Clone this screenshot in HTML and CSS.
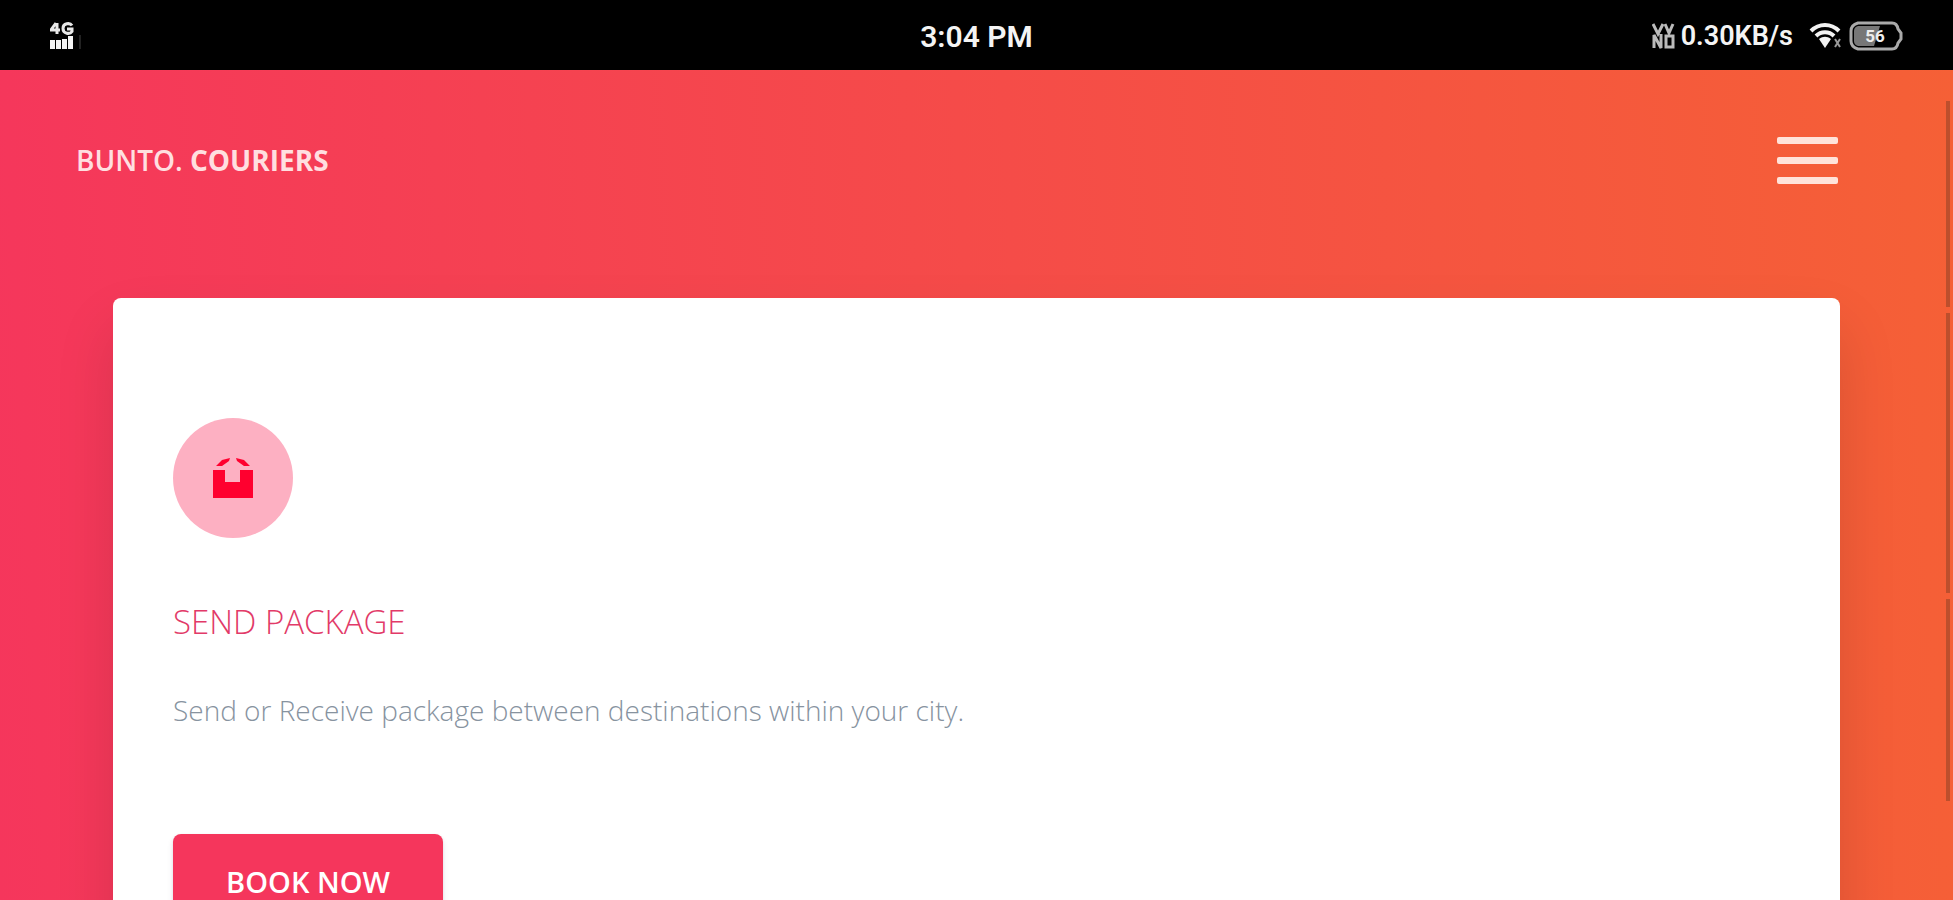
FILE: index.html
```
<!DOCTYPE html>
<html lang="en">
<head>
  <meta charset="UTF-8" />
  <meta name="viewport" content="width=device-width, initial-scale=1.0"/>
  <title>Bunto. Couriers</title>
  <link rel="stylesheet" href="styles.css">
</head>
<body>
  <div class="status-bar">
    <div class="status-left">
      <svg class="signal" width="32" height="30" viewBox="0 0 32 30" aria-hidden="true">
        <path d="M6 2L1 9h9M7 2v11M22 4.500c-2-3-9-2.500-9 3s7 6 9 3V8h-5" fill="none" stroke="#e8e8e8" stroke-width="3"/>
        <path d="M0 19h5v9H0zM6 19h5v9H6zM12 18h5v10h-5zM18 15h5v13h-5z" fill="#f4f4f4"/>
        <path d="M29 14h2v14h-2z" fill="#222"/>
      </svg>
    </div>
    <div class="clock">3:04 PM</div>
    <div class="status-right">
      <svg width="23" height="26" viewBox="0 0 23 26" aria-hidden="true">
        <path d="M1 1l5 10 5-10M2 25V12l7 13V11M13 1l4 9 4-9" fill="none" stroke="#bbb" stroke-width="3"/>
        <rect x="14" y="13" width="7" height="11" fill="none" stroke="#bbb" stroke-width="3"/>
      </svg>
      <span class="speed">0.30KB/s</span>
      <svg class="wifi" width="34" height="26" viewBox="0 0 34 26" aria-hidden="true">
        <path d="M2 8c8-8 20-8 28 0M7 13c5-5 13-5 18 0" fill="none" stroke="#f2f2f2" stroke-width="4"/>
        <path d="M10 16c4-3 8-3 12 0l-6 9z" fill="#f2f2f2"/>
        <path d="M26 16l5 8M31 16l-5 8" stroke="#999" stroke-width="2"/>
      </svg>
      <svg width="54" height="30" viewBox="0 0 54 30" aria-hidden="true">
        <path d="M9 2h34q5 0 6 6l3 4v6l-3 4q-1 6-6 6H9q-7-2-7-8v-10q0-6 7-8z" fill="#000" stroke="#aaa" stroke-width="3"/>
        <path d="M9 5h22l-6 20H9q-4-1-4-5V10q0-4 4-5z" fill="#777"/>
        <text class="battery-text" x="26" y="21" text-anchor="middle">56</text>
      </svg>
    </div>
  </div>

  <div class="page">
    <header class="navbar">
      <a class="brand" href="#">BUNTO. <b>COURIERS</b></a>
      <button class="menu-btn" type="button" aria-label="Menu">
        <span></span>
        <span></span>
        <span></span>
      </button>
    </header>

    <main class="card">
      <div class="icon-circle">
        <svg width="40" height="42" viewBox="0 0 40 42" aria-hidden="true">
          <path d="M0 13h12v12h15V13h13v28H0zM3 9l6-6 8-2-1 3-7 5zM23 1l8 2 6 6h-6l-7-5z" fill="#ff002f"/>
        </svg>
      </div>
      <h2>SEND PACKAGE</h2>
      <p>Send or Receive package between destinations within your city.</p>
      <button class="book-btn" type="button">BOOK NOW</button>
    </main>

    <div class="scroll-thumb">
      <span></span>
      <span></span>
      <span></span>
    </div>
  </div>
</body>
</html>
```
FILE: styles.css
```
* {
  box-sizing: border-box;
}

body {
  margin: 0;
  height: 100vh;
  display: flex;
  flex-direction: column;
  overflow: hidden;
  font-family: "Open Sans", sans-serif;
  background-color: #000;
}

.status-bar {
  flex: none;
  display: grid;
  grid-template-columns: 1fr auto 1fr;
  align-items: center;
  height: 70px;
  padding: 2px 50px 0;
  background-color: #000;
  color: #f4f4f4;
  font-family: Roboto, sans-serif;
  font-weight: 600;
}

.status-left,
.status-right {
  display: flex;
  align-items: center;
}

.status-right {
  justify-content: flex-end;
  gap: 6px;
}

.clock {
  font-size: 30px;
}

.speed {
  font-size: 27px;
}

.wifi {
  margin-left: 10px;
}

.battery-text {
  font-size: 17px;
  font-weight: 700;
  fill: #eee;
}

.page {
  position: relative;
  flex: 1;
  min-height: 0;
  overflow: hidden;
  background: linear-gradient(87deg, #f5365c 0%, #f56036 100%);
}

.navbar {
  display: flex;
  align-items: center;
  justify-content: space-between;
  height: 180px;
  padding: 0 115px 0 76px;
}

.brand {
  color: #ffdfe0;
  font-size: 28px;
  font-weight: 600;
  text-decoration: none;
}

.brand b {
  font-weight: 700;
}

.menu-btn {
  display: flex;
  flex-direction: column;
  gap: 13px;
  width: 61px;
  padding: 0;
  border: none;
  background: none;
  cursor: pointer;
}

.menu-btn span {
  height: 7px;
  border-radius: 2px;
  background-color: #ffe3da;
}

.card {
  margin: 48px 113px 0;
  padding: 120px 60px;
  border-radius: 8px;
  background-color: #fff;
  box-shadow: 0 30px 60px rgba(0, 0, 0, 0.12);
}

.icon-circle {
  display: flex;
  align-items: center;
  justify-content: center;
  width: 120px;
  height: 120px;
  border-radius: 50%;
  background-color: #fdb0c2;
}

h2 {
  margin: 60px 0 0;
  color: #e23a68;
  font-size: 33px;
  font-weight: 300;
  line-height: 48px;
}

p {
  margin: 39px 0 0;
  color: #87939f;
  font-size: 28px;
  font-weight: 300;
  line-height: 50px;
}

.book-btn {
  margin-top: 99px;
  width: 270px;
  height: 96px;
  border: none;
  border-radius: 8px;
  background-color: #f5365c;
  box-shadow: 0 4px 6px rgba(50, 50, 93, 0.11), 0 1px 3px rgba(0, 0, 0, 0.08);
  color: #fff;
  font-family: inherit;
  font-size: 29px;
  font-weight: 600;
  line-height: 30px;
  cursor: pointer;
}

/* overlay scrollbar on the right edge */
.scroll-thumb {
  position: absolute;
  top: 31px;
  right: 3px;
  display: grid;
  grid-template-rows: 206fr 280fr 202fr;
  gap: 6px;
  width: 4px;
  height: 700px;
}

.scroll-thumb span {
  background-color: #bd4f2d;
}
```
